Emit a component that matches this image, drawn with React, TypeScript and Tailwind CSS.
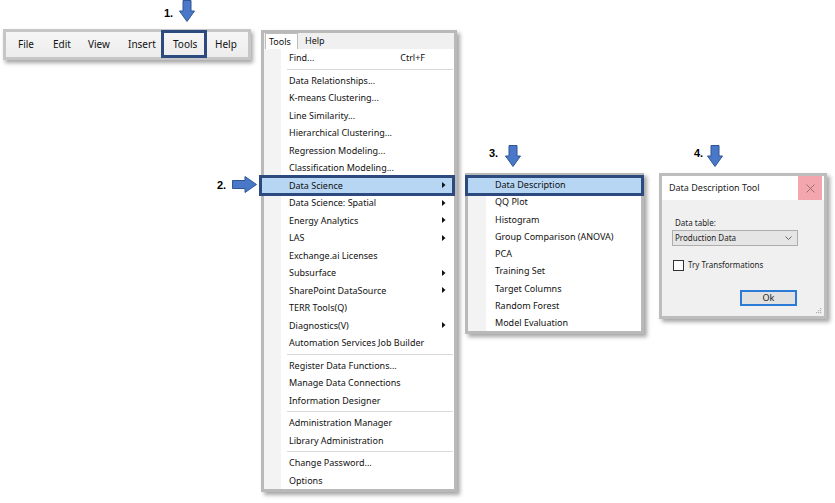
import React from "react";

const Tri = () => (
  <svg width="4" height="6" viewBox="0 0 4 6" className="block">
    <path d="M0 0 L3.5 3 L0 6Z" fill="#111" />
  </svg>
);

function DownArrow({ className }: { className: string }) {
  return (
    <svg className={className} width="16" height="22" viewBox="0 0 16 22">
      <path d="M4 0.5H12V11H15.5L8 21.5L0.5 11H4Z" fill="#4a78c8" stroke="#2f5597" strokeWidth="1" />
    </svg>
  );
}

function RightArrow({ className }: { className: string }) {
  return (
    <svg className={className} width="25" height="17" viewBox="0 0 25 17">
      <path d="M0.5 4.5H13V0.5L24.5 8.5L13 16.5V12.5H0.5Z" fill="#4a78c8" stroke="#2f5597" strokeWidth="1" />
    </svg>
  );
}

type MIProps = {
  label: string;
  right?: string;
  sub?: boolean;
  hl?: string;
  h?: string;
  pl?: string;
};

function MI({ label, right, sub, hl, h = "h-[17.5px]", pl = "pl-[25px]" }: MIProps) {
  return (
    <div className={`relative ${h} flex items-center ${pl} pr-[8px]`}>
      {hl && <div className={hl} />}
      <span className="relative flex-1 whitespace-nowrap leading-none">{label}</span>
      {right && <span className="relative mr-[21px] leading-none">{right}</span>}
      {sub && (
        <span className="relative">
          <Tri />
        </span>
      )}
    </div>
  );
}

const Sep = () => (
  <div className="h-[5px] flex items-center pl-[23px] pr-[1px]">
    <div className="h-px flex-1 bg-[#d9d9d9]" />
  </div>
);

export default function App() {
  return (
    <div className="relative w-[835px] h-[503px] overflow-hidden bg-white text-[#111] font-['Noto_Sans',sans-serif]">
      {/* Step labels & arrows */}
      <span className="absolute left-[164px] top-[5px] text-[11px] font-bold font-['Liberation_Sans',sans-serif] text-black leading-[16px]">1.</span>
      <DownArrow className="absolute left-[179px] top-0" />
      <span className="absolute left-[217px] top-[177px] text-[11px] font-bold font-['Liberation_Sans',sans-serif] text-black leading-[16px]">2.</span>
      <RightArrow className="absolute left-[232px] top-[176px]" />
      <span className="absolute left-[489px] top-[145px] text-[11px] font-bold font-['Liberation_Sans',sans-serif] text-black leading-[16px]">3.</span>
      <DownArrow className="absolute left-[505px] top-[145px]" />
      <span className="absolute left-[694px] top-[145px] text-[11px] font-bold font-['Liberation_Sans',sans-serif] text-black leading-[16px]">4.</span>
      <DownArrow className="absolute left-[707px] top-[145px]" />

      {/* Menubar */}
      <div className="absolute left-[3px] top-[29px] w-[248px] h-[31px] border-[3px] border-[#c6c6c6] bg-[linear-gradient(#f6f6f6,#ececec)] shadow-[2px_3px_4px_rgba(0,0,0,0.35)] flex items-stretch pl-[12px] text-[10px]">
        <div className="w-[35px] flex items-center">File</div>
        <div className="w-[35px] flex items-center">Edit</div>
        <div className="w-[40px] flex items-center">View</div>
        <div className="w-[45px] flex items-center">Insert</div>
        <div className="relative w-[42px] flex items-center">
          <div className="absolute left-[-12px] w-[46px] top-[-2px] bottom-[-1px] border-[3px] border-[#2c4a7e]" />
          <span className="relative">Tools</span>
        </div>
        <div className="flex items-center">Help</div>
      </div>

      {/* Tools menu */}
      <div className="absolute left-[261px] top-[30px] w-[196px] border-[3px] border-[#b9b9b9] bg-white shadow-[3px_3px_4px_rgba(0,0,0,0.35)] text-[9px]">
        <div className="h-[16px] flex items-stretch bg-[#f0f0f0]">
          <div className="ml-[1px] w-[33px] pl-[3px] border border-b-0 border-[#bdbdbd] bg-white flex items-center">Tools</div>
          <div className="pl-[7px] flex items-center">Help</div>
        </div>
        <div className="bg-[linear-gradient(to_right,#f3f3f3_17px,#ffffff_17px)]">
          <MI label="Find..." right="Ctrl+F" />
          <Sep />
          <MI label="Data Relationships..." />
          <MI label="K-means Clustering..." />
          <MI label="Line Similarity..." />
          <MI label="Hierarchical Clustering..." />
          <MI label="Regression Modeling..." />
          <MI label="Classification Modeling..." />
          <MI
            label="Data Science"
            sub
            hl="absolute left-[-5px] right-[-1px] top-[-1.5px] bottom-[-2px] border-[3px] border-[#2c4a7e] bg-[#b6d6f3]"
          />
          <MI label="Data Science: Spatial" sub />
          <MI label="Energy Analytics" sub />
          <MI label="LAS" sub />
          <MI label="Exchange.ai Licenses" />
          <MI label="Subsurface" sub />
          <MI label="SharePoint DataSource" sub />
          <MI label="TERR Tools(Q)" />
          <MI label="Diagnostics(V)" sub />
          <MI label="Automation Services Job Builder" />
          <Sep />
          <MI label="Register Data Functions..." />
          <MI label="Manage Data Connections" />
          <MI label="Information Designer" />
          <Sep />
          <MI label="Administration Manager" />
          <MI label="Library Administration" />
          <Sep />
          <MI label="Change Password..." />
          <MI label="Options" />
        </div>
      </div>

      {/* Data Science submenu */}
      <div className="absolute left-[465px] top-[173px] w-[179px] border-[3px] border-[#b9b9b9] bg-[linear-gradient(to_right,#f3f3f3_18px,#ffffff_18px)] shadow-[3px_3px_4px_rgba(0,0,0,0.35)] text-[9px]">
        <MI
          label="Data Description"
          h="h-[17.25px]"
          pl="pl-[27px]"
          hl="absolute left-[-3px] right-[-3px] top-[-1px] bottom-[-2.5px] border-[3px] border-[#2c4a7e] bg-[#b6d6f3]"
        />
        <MI label="QQ Plot" h="h-[17.25px]" pl="pl-[27px]" />
        <MI label="Histogram" h="h-[17.25px]" pl="pl-[27px]" />
        <MI label="Group Comparison (ANOVA)" h="h-[17.25px]" pl="pl-[27px]" />
        <MI label="PCA" h="h-[17.25px]" pl="pl-[27px]" />
        <MI label="Training Set" h="h-[17.25px]" pl="pl-[27px]" />
        <MI label="Target Columns" h="h-[17.25px]" pl="pl-[27px]" />
        <MI label="Random Forest" h="h-[17.25px]" pl="pl-[27px]" />
        <MI label="Model Evaluation" h="h-[17.25px]" pl="pl-[27px]" />
      </div>

      {/* Dialog */}
      <div className="absolute left-[659px] top-[173px] w-[168px] h-[146px] border-[3px] border-[#bdbdbd] bg-[#f0f0f0] shadow-[3px_3px_4px_rgba(0,0,0,0.35)] flex flex-col">
        <div className="h-[24px] bg-white flex items-center pl-[7px] pr-[2px] text-[9px] text-[#222]">
          <span className="flex-1">Data Description Tool</span>
          <div className="w-[24px] h-[24px] bg-[#f4a6ae] flex items-center justify-center">
            <svg width="9" height="9" viewBox="0 0 9 9">
              <path d="M0.5 0.5L8.5 8.5M8.5 0.5L0.5 8.5" stroke="#8a6a6a" strokeWidth="0.9" />
            </svg>
          </div>
        </div>
        <div className="relative flex-1 flex flex-col pl-[10px] text-[8px] text-[#1e1e1e]">
          <div className="mt-[17px] pl-[3px] leading-[12px]">Data table:</div>
          <div className="mt-[1px] w-[126px] h-[16px] border border-[#adadad] bg-[#e5e5e5] flex items-center pl-[2px] pr-[5px]">
            <span className="flex-1">Production Data</span>
            <svg width="7" height="4" viewBox="0 0 7 4">
              <path d="M0.5 0.5L3.5 3.5L6.5 0.5" stroke="#555" strokeWidth="0.9" fill="none" />
            </svg>
          </div>
          <div className="mt-[13px] flex items-center pl-[1px]">
            <div className="w-[11px] h-[11px] border border-[#333] bg-white" />
            <span className="ml-[4px]">Try Transformations</span>
          </div>
          <div className="mt-[19px] ml-[68px] w-[57px] h-[16px] border-2 border-[#2b7bd6] bg-[#e1e1e1] flex items-center justify-center text-[9px]">
            Ok
          </div>
          <svg className="absolute right-[2px] bottom-[2px]" width="6" height="6" viewBox="0 0 6 6">
            <rect x="4" y="0" width="1.2" height="1.2" fill="#b0b0b0" />
            <rect x="2" y="2" width="1.2" height="1.2" fill="#b0b0b0" />
            <rect x="4" y="2" width="1.2" height="1.2" fill="#b0b0b0" />
            <rect x="0" y="4" width="1.2" height="1.2" fill="#b0b0b0" />
            <rect x="2" y="4" width="1.2" height="1.2" fill="#b0b0b0" />
            <rect x="4" y="4" width="1.2" height="1.2" fill="#b0b0b0" />
          </svg>
        </div>
      </div>
    </div>
  );
}
